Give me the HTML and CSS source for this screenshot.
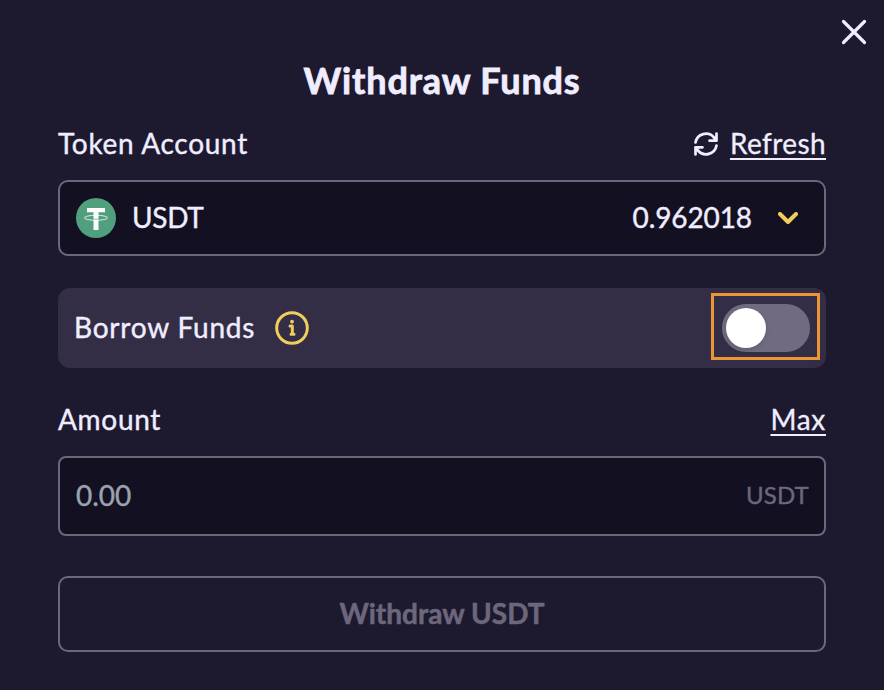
FILE: index.html
```html
<!DOCTYPE html>
<html lang="en">
<head>
<meta charset="utf-8">
<title>Withdraw Funds</title>
<link rel="stylesheet" href="styles.css">
</head>
<body>
<main class="modal">
  <button class="close" aria-label="Close"><svg width="26" height="26" viewBox="0 0 26 26"><path d="M2.500 2.500l21 21M23.500 2.500l-21 21"/></svg></button>
  <h1>Withdraw Funds</h1>
  <div class="label-row token-row">
    <span>Token Account</span>
    <a class="refresh"><svg width="24" height="24" viewBox="0 0 24 24"><path d="M1.500 10.500A10.600 10.600 0 0 1 20 5.500L22.500 8.500M22.500 1.500v7.200h-7M22.500 13.500A10.600 10.600 0 0 1 4 18.500L1.500 15.500M1.500 22.500v-7.200h7"/></svg><u>Refresh</u></a>
  </div>
  <div class="select">
    <svg class="coin" width="40" height="40" viewBox="0 0 40 40"><circle cx="20" cy="20" r="20" fill="#509f7d"/><path d="M11 10h18v4.200h-6.500V18h-5V14.200H11zM17.500 21.500h5V32h-5z" fill="#fff"/><path d="M17.500 17h5v3.800h-5z" fill="#fff"/><ellipse cx="20" cy="19.800" rx="11.600" ry="2.500" fill="none" stroke="#fff" stroke-width=".8"/></svg>
    <span class="symbol">USDT</span>
    <span class="balance">0.962018</span>
    <svg class="chevron" width="20" height="12" viewBox="0 0 20 12"><path d="M2 2l8 8 8-8"/></svg>
  </div>
  <div class="borrow">
    <span>Borrow Funds</span>
    <svg class="info" width="34" height="34" viewBox="0 0 34 34"><circle cx="17" cy="17" r="15.300"/><path d="M15 15h2.300v8.200M16 23.200h3"/><circle class="dot" cx="17" cy="10.700" r="1.900"/></svg>
    <div class="highlight"><div class="toggle"><i></i></div></div>
  </div>
  <div class="label-row amount-row"><span>Amount</span><u>Max</u></div>
  <div class="input"><span>0.00</span><span class="unit">USDT</span></div>
  <button class="submit">Withdraw USDT</button>
</main>
</body>
</html>
```
FILE: styles.css
```css
* { box-sizing: border-box; }
body { margin: 0; background: #1d192e; color: #f0edff; font: 28px/40px Lato, sans-serif; -webkit-text-stroke: .4px currentColor; }
.modal { position: relative; height: 690px; padding: 55px 58px 0; }
svg { display: block; flex: none; }
button { padding: 0; background: none; font: inherit; }
.close { position: absolute; top: 19px; right: 17px; border: 0; }
.close path { fill: none; stroke: #f0edff; stroke-width: 3.2; stroke-linecap: round; }
h1 { margin: 0; font-size: 36px; line-height: 50px; font-weight: 700; text-align: center; letter-spacing: .85px; -webkit-text-stroke-width: .8px; }
.label-row { display: flex; justify-content: space-between; height: 40px; letter-spacing: .7px; }
.token-row { margin-top: 18px; }
.refresh { display: flex; align-items: center; gap: 12px; height: 40px; letter-spacing: .4px; }
.refresh svg { margin-top: 2px; }
.refresh path { fill: none; stroke: #f0edff; stroke-width: 2.7; stroke-linecap: round; stroke-linejoin: round; }
u { text-decoration-thickness: 2px; text-underline-offset: 4px; text-decoration-skip-ink: none; -webkit-text-stroke-width: .3px; }
.select, .input { display: flex; align-items: center; border: 2px solid #6c677c; border-radius: 10px; background: #131022; padding: 0 16px; }
.select { height: 76px; margin-top: 17px; }
.symbol { margin-left: 16px; letter-spacing: -.3px; }
.symbol, .balance, .input span, .borrow > span { padding-bottom: 2px; }
.balance { margin-left: auto; letter-spacing: -.1px; }
.chevron { margin: 0 10px 0 26px; }
.chevron path { fill: none; stroke: #f0cd5d; stroke-width: 4; stroke-linecap: round; stroke-linejoin: round; }
.borrow { display: flex; align-items: center; height: 80px; margin-top: 32px; padding: 0 6px 0 16px; border-radius: 12px; background: #332e46; }
.borrow > span { width: 181px; letter-spacing: .8px; white-space: nowrap; }
.info { margin-left: 20px; fill: none; stroke: #f0cd5d; stroke-width: 3; stroke-linecap: round; stroke-linejoin: round; }
.info .dot { fill: #f0cd5d; stroke: none; }
.highlight { align-self: flex-start; margin: 5px 0 0 auto; padding: 8px 7px 5px 8px; border: 3px solid #ea9634; }
.toggle { width: 88px; height: 48px; padding: 4px; border-radius: 24px; background: #706b80; }
.toggle i { display: block; width: 40px; height: 40px; border-radius: 50%; background: #fff; box-shadow: 0 2px 4px #0002; }
.amount-row { margin-top: 31px; }
.input { height: 80px; margin-top: 17px; color: #9ca3af; justify-content: space-between; border-radius: 8px; }
.input .unit { margin-right: -1px; color: #6c677c; font-size: 24px; letter-spacing: .2px; }
.submit { display: block; width: 100%; height: 76px; margin-top: 40px; padding-bottom: 2px; border: 2px solid #6c677c; border-radius: 10px; color: #6c677c; font-weight: 700; -webkit-text-stroke-width: .5px; }
```
